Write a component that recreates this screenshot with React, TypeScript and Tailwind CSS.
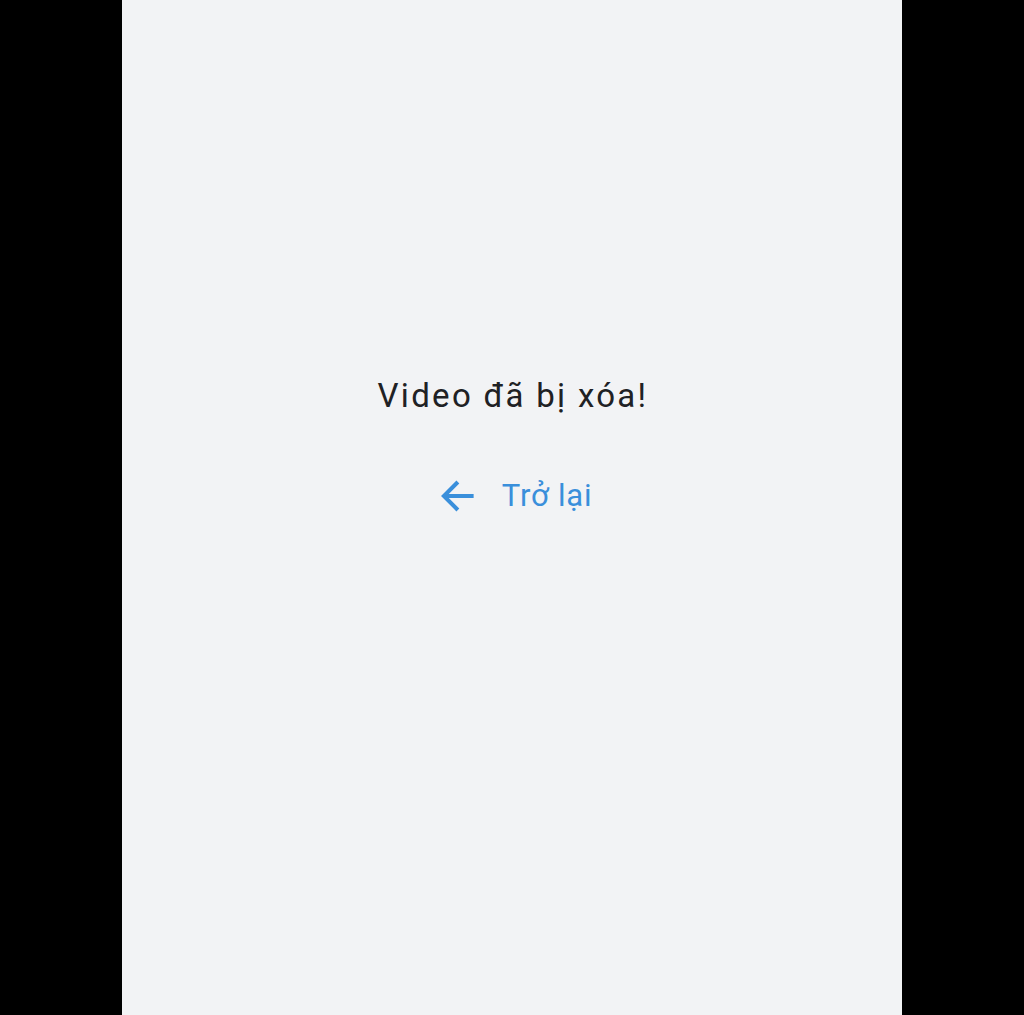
import React from "react";

export default function App() {
  return (
    <div className="flex h-[1015px] w-full justify-center bg-black" style={{ fontFamily: "Roboto, 'Noto Sans', sans-serif" }}>
      <div className="flex w-[780px] flex-col items-center bg-[#f2f3f5] pt-[372px]">
        <h1 className="pl-[2px] text-[33px] leading-[48px] font-normal tracking-[2.3px] text-[#202124]">Video đã bị xóa!</h1>
        <button className="mt-[55px] flex items-center gap-[24px] pl-[4px] text-[#3a8fdb]">
          <svg width="42" height="42" viewBox="0 0 24 24" fill="none" stroke="currentColor" strokeWidth="2.3" strokeLinecap="butt" strokeLinejoin="miter">
            <path d="M21.5 12H4.5" />
            <path d="M12.5 4 4.5 12l8 8" />
          </svg>
          <span className="text-[31px] leading-[40px] tracking-[0.8px]">Trở lại</span>
        </button>
      </div>
    </div>
  );
}
